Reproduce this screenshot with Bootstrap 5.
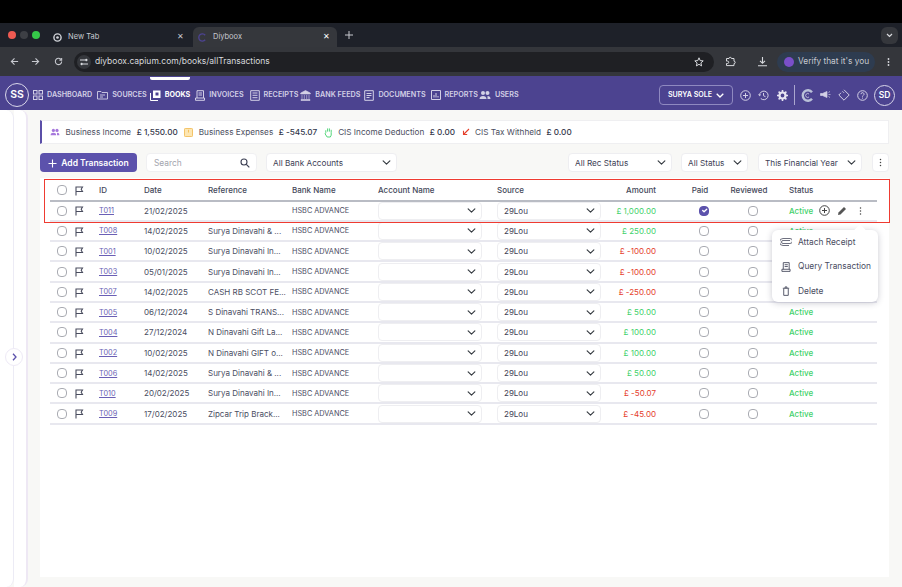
<!DOCTYPE html>
<html lang="en"><head><meta charset="utf-8"><title>Diyboox</title>
<link href="https://cdn.jsdelivr.net/npm/bootstrap@5.3.0/dist/css/bootstrap.min.css" rel="stylesheet">
<style>
html,body{height:587px;overflow:hidden}
body{background:#f8f8f6;font-family:Inter,"Liberation Sans",sans-serif;font-size:8px;color:#3d4054}
.blackbar{height:23px;background:#000}
.tabstrip{height:24px;background:#1e2129;color:#c7c9cf;font-size:7.5px;padding-left:8px}
.dot{width:8px;height:8px;border-radius:50%}
.chrome-tab{height:20px;width:144px;margin:4px 0 0 8px;border-radius:6px 6px 0 0;padding:0 7px 0 5px;background:#35373c}
.chrome-tab.idle{background:none;margin-left:13px;width:132px;padding:0 1px 0 0}
.tab-label{gap:6px}
.toolbar{height:29px;background:#34363b;color:#c7c9cf;padding:0 12px 0 10px;font-size:8.5px}
.tool-gap{margin-left:12px}
.tool-gap.wide{margin-left:14px}
.omni{height:20px;width:640px;margin-left:11px;border-radius:10px;background:#1f2024;padding:0 10px 0 3px;color:#d8dade}
.omni-ic{width:14px;height:14px;border-radius:50%;background:#35373c}
.ext-ic{margin-left:11px}
.dl-ic{margin-left:21px}
.verify{height:20px;width:98px;margin-left:9px;padding-left:7px;border-radius:10px;background:#2e3c50;font-size:8.3px}
.appnav{height:34px;background:#4c4390;padding:4px 7px 0 5px;color:#d3d0e6;font-size:7.2px;font-weight:600;position:relative}
.appnav .navlnk{color:inherit;text-decoration:none;display:flex;align-items:center;gap:4px;white-space:nowrap}
.appnav .navlnk.on{color:#fff;font-weight:700;position:relative}
.appnav .navlnk.on::before{content:"";position:absolute;left:0;right:0;top:-13px;height:3px;background:#fff;border-radius:0 0 2px 2px}
.nudge-b{margin-left:-2px}.nudge-r{margin-left:1px}.nudge-f{margin-left:-3px}.nudge-d{margin-left:-1px}.nudge-u{margin-left:-4px}
.avatar{width:24px;height:24px;border-radius:50%;border:1px solid #d9d6ea;color:#fff;font-size:10.5px;font-weight:600}
.avatar.sm{width:21px;height:21px;font-size:8.5px}
.co-btn{height:20px;width:74px;border:1px solid #8f89c0;border-radius:4px;color:#fff;font-size:7.1px;font-weight:600}
.vrule{width:1px;height:20px;background:#aaa6cf}
.navtools{gap:7px}
.navtools .tight{margin-left:-1px}
.navtools .loose{margin-left:1px}
.stage{height:477px;position:relative}
.rail{width:14px;background:#fff;border-right:1px solid #ecebf5;border-radius:0 8px 8px 0}
.rail.outer{border-right:2px solid #eee8f4}
.panel{margin:0 13px 10px 12px;width:849px;position:relative}
.sumbar{height:24px;margin-top:10px;background:#fff;border:1px solid #efeff1;border-left:2px solid #5b4fa8;padding-left:8px;gap:5.5px;font-size:8.2px;color:#4b4e60}
.sumbar b{font-weight:500;color:#33364a;margin-right:1px}
.filters{height:19px;margin-top:9px}
.add-btn{width:97px;height:19px;background:#5c52ac;border:0;border-radius:4px;color:#fff;font-size:8.5px;font-weight:600;padding:1px 0 0}
.add-btn:hover{background:#5c52ac;color:#fff}
.searchbox{width:111px;height:19px;margin-left:9px;background:#fff;border:1px solid #f0f0f2;border-radius:4px;padding:1px 6px 0 7px;color:#a3a5ae;font-size:8.4px}
.filters .form-select,.rowtbl .form-select{font-size:8.2px;color:#3d4054;border:1px solid #eeeef1;border-radius:4px;padding:1px 14px 0 6px;height:19px;background-size:11px 9px;background-position:right 4px center;box-shadow:none}
.bankpick{flex:0 0 131px;margin-left:9px}
.recpick{flex:0 0 104px;margin-left:auto}
.statpick{flex:0 0 67px;margin-left:9px}
.yearpick{flex:0 0 104px;margin-left:10px}
.kebab-btn{width:17px;height:19px;margin-left:10px;background:#fff;border:1px solid #eeeef1;border-radius:4px}
.tblcard{background:#fff;height:399px;margin-top:6px;padding:3px 12px 0 10px}
.tblwrap{width:827px;position:relative}
.rowtbl{table-layout:fixed;width:827px;margin:0;border-collapse:collapse;font-size:8px;--bs-table-bg:transparent}
.rowtbl th,.rowtbl td{padding:0;height:20.3px;vertical-align:middle;border-bottom:2px solid #e8e8ef;white-space:nowrap;overflow:visible;box-shadow:none}
.rowtbl th{font-weight:500;color:#444759;border-bottom:2px solid #b9bcc4;height:19.5px}
.rowtbl td{color:#4a4d5f}
.rowtbl td.amt,.rowtbl th.amt{text-align:right;padding-right:24px}
.rowtbl .ctr{text-align:center}
.rowtbl th.ctr{padding-right:8px}
.rowtbl .stat{padding-left:11px}
.rowtbl .flagcell{padding-left:3px}
.rowtbl td.bank{font-size:7.3px;padding-top:2px}
.rowtbl a{color:#6a5fb5;font-size:7.3px}
.rowtbl .form-select{height:18px;width:104px;font-size:8px;padding:0 14px 0 6px}
.rowtbl td.pos{color:#3fd16b}.rowtbl td.neg{color:#e5402c}
.stt{color:#3fd16b;font-weight:500}
.rowtbl .form-check-input{width:10px;height:10px;margin:0;display:block;border:1px solid #a9abb2;border-radius:4px;background-size:9px;box-shadow:none}
.rowtbl .form-check-input:checked{background-color:#5c52ac;border-color:#5c52ac}
.rowtbl .ctr .form-check-input{margin:0 auto}
.rowtbl .cb-first{padding-left:7px}
.act-a{margin-left:6px}.act-b{margin-left:7px}.act-c{margin-left:12px}
.redbox{position:absolute;left:-6px;top:-2px;width:846px;height:44px;border:1.5px solid #ef3b31;pointer-events:none}
.rowmenu{display:block;position:absolute;left:722px;top:49px;width:106px;height:72px;min-width:0;padding:0;border:0;border-radius:6px;box-shadow:0 1px 6px rgba(40,40,70,.25);font-size:8.5px;z-index:5}
.rowmenu::before{content:"";position:absolute;right:14px;top:-4px;width:8px;height:8px;background:#fff;transform:rotate(45deg)}
.rowmenu .dropdown-item{height:24.5px;padding:0 0 0 8px;font-size:8.4px;color:#4a4d5f;gap:6px;display:flex;align-items:center;position:relative}
.sidetoggle{position:absolute;left:5px;top:238px;width:18px;height:18px;border-radius:50%;background:#fff;border:1px solid #eeeaf6;z-index:3}
</style></head>
<body>
<svg width="0" height="0" class="position-absolute">
<symbol id="flag" viewBox="0 0 10 10"><path d="M2 9.5V1h6.5L7.2 3.200 8.500 5.500H2" fill="none" stroke="#4a4d5f" stroke-width="1.100"/></symbol>
<symbol id="dots" viewBox="0 0 4 12"><circle cx="2" cy="2" r="1" fill="#444"/><circle cx="2" cy="6" r="1" fill="#444"/><circle cx="2" cy="10" r="1" fill="#444"/></symbol>
</svg>
<div class="blackbar"></div>
<div class="tabstrip d-flex align-items-center">
  <span class="dot me-1" style="background:#ee5a52"></span><span class="dot me-1" style="background:#3d3f45"></span><span class="dot" style="background:#35c749"></span>
  <div class="chrome-tab idle d-flex align-items-center justify-content-between"><span class="d-flex align-items-center tab-label"><svg width="9" height="9" viewBox="0 0 10 10"><circle cx="5" cy="5" r="4" fill="none" stroke="#d0d2d8" stroke-width="1.600"/><circle cx="5" cy="5" r="1.500" fill="#d0d2d8"/></svg>New Tab</span><span>✕</span></div>
  <div class="chrome-tab d-flex align-items-center justify-content-between"><span class="d-flex align-items-center tab-label"><svg width="9" height="9" viewBox="0 0 10 10"><path d="M8 2.500a4 4 0 1 0 0 5" fill="none" stroke="#4c4390" stroke-width="1.500"/></svg><span>Diyboox</span></span><span class="text-white">✕</span></div>
  <svg class="ms-2" width="8" height="8" viewBox="0 0 8 8"><path d="M4 0v8M0 4h8" stroke="#c7c9cf" stroke-width="1"/></svg>
  <div class="ms-auto me-1 d-flex align-items-center justify-content-center rounded-2" style="width:17px;height:17px;background:#35373c"><svg width="7" height="5" viewBox="0 0 7 5"><path d="M1 1l2.500 2.500L6 1" fill="none" stroke="#d8dade" stroke-width="1.200"/></svg></div>
</div>
<div class="toolbar d-flex align-items-center">
  <svg width="9" height="9" viewBox="0 0 10 10"><path d="M9 5H1.500M5 1.500L1.500 5 5 8.500" fill="none" stroke="#c7c9cf" stroke-width="1.200"/></svg>
  <svg class="tool-gap" width="9" height="9" viewBox="0 0 10 10"><path d="M1 5h7.500M5 1.500L8.500 5 5 8.500" fill="none" stroke="#c7c9cf" stroke-width="1.200"/></svg>
  <svg class="tool-gap wide" width="9" height="9" viewBox="0 0 10 10"><path d="M8.500 5A3.500 3.500 0 1 1 7.500 2.500M8.500 1v2.500H6" fill="none" stroke="#c7c9cf" stroke-width="1.200"/></svg>
  <div class="omni d-flex align-items-center"><span class="omni-ic d-flex align-items-center justify-content-center me-1"><svg width="8" height="8" viewBox="0 0 8 8"><path d="M0 2h5M3 6h5" stroke="#d8dade"/><circle cx="6.300" cy="2" r="1.200" fill="#d8dade"/><circle cx="1.700" cy="6" r="1.200" fill="#d8dade"/></svg></span><span>diyboox.capium.com/books/allTransactions</span>
  <svg class="ms-auto" width="10" height="10" viewBox="0 0 10 10"><path d="M5 .8l1.200 2.800 3 .3-2.300 2 .7 3L5 7.300 2.400 8.900l.7-3-2.300-2 3-.3z" fill="none" stroke="#d8dade"/></svg></div>
  <svg class="ext-ic" width="11" height="11" viewBox="0 0 11 11"><path d="M1.500 2.500h2.500a1.200 1.200 0 0 1 2.400 0H9v2.700a1.200 1.200 0 0 1 0 2.400v2H1.500V7.500h1a1.200 1.200 0 0 0 0-2.400h-1z" fill="none" stroke="#d8dade"/></svg>
  <svg class="dl-ic" width="11" height="11" viewBox="0 0 11 11"><path d="M5.500 1v6M3 4.800l2.500 2.500L8 4.800M1 9.800h9" fill="none" stroke="#d8dade" stroke-width="1.100"/></svg>
  <div class="verify d-flex align-items-center gap-1"><span class="rounded-circle d-inline-block" style="width:10px;height:10px;background:#7a4fc9"></span><span>Verify that it's you</span></div>
  <svg class="ms-auto" width="3" height="10" viewBox="0 0 4 12"><circle cx="2" cy="2" r="1.200" fill="#d8dade"/><circle cx="2" cy="6" r="1.200" fill="#d8dade"/><circle cx="2" cy="10" r="1.200" fill="#d8dade"/></svg>
</div>
<nav class="appnav d-flex align-items-center">
  <div class="avatar d-flex align-items-center justify-content-center">SS</div>
  <div class="d-flex align-items-center ms-1" style="gap:5px">
    <a class="navlnk"><svg width="10" height="10" viewBox="0 0 10 10"><g fill="none" stroke="currentColor"><rect x=".5" y=".5" width="3.500" height="3.500"/><rect x="6" y=".5" width="3.500" height="3.500"/><rect x=".5" y="6" width="3.500" height="3.500"/><rect x="6" y="6" width="3.500" height="3.500"/></g></svg>DASHBOARD</a>
    <a class="navlnk"><svg width="11" height="10" viewBox="0 0 11 10"><path d="M.5 9V1.500h3.500l1 1h5.500V9zM3 5h5M3 7h3" fill="none" stroke="currentColor" stroke-width=".9"/></svg>SOURCES</a>
    <a class="navlnk on nudge-b"><svg width="11" height="11" viewBox="0 0 11 11"><path d="M3 .5h7.500V8H3z" fill="currentColor"/><path d="M.5 3v7.500H8" fill="none" stroke="currentColor"/><path d="M5.500 2.500h3v3h-3z" fill="#4c4390"/></svg>BOOKS</a>
    <a class="navlnk"><svg width="10" height="11" viewBox="0 0 10 11"><path d="M2 8V.7h6.500V8M.5 10.300h9V8H.5zM3.500 3h3.500M3.500 5h3.500" fill="none" stroke="currentColor"/></svg>INVOICES</a>
    <a class="navlnk nudge-r"><svg width="10" height="11" viewBox="0 0 10 11"><path d="M.7.700h8.600v9.600H.7zM2.500 3h5M2.500 5.300h5M2.500 7.700h5" fill="none" stroke="currentColor"/></svg>RECEIPTS</a>
    <a class="navlnk nudge-f"><svg width="11" height="11" viewBox="0 0 11 11"><path d="M5.500.5L.7 3v1h9.600V3zM1 9.500h9V10.500H1zM2 5v4M4.300 5v4M6.700 5v4M9 5v4" fill="currentColor" stroke="currentColor" stroke-width=".6"/></svg>BANK FEEDS</a>
    <a class="navlnk nudge-d"><svg width="10" height="11" viewBox="0 0 10 11"><path d="M.7.700h8.600v9.600H.7zM2.500 3.500h5M2.500 5.500h5M2.500 7.500h3" fill="none" stroke="currentColor"/></svg>DOCUMENTS</a>
    <a class="navlnk"><svg width="10" height="10" viewBox="0 0 10 10"><path d="M.5.500h9v9h-9zM3 7.500V5M5 7.500V3M7 7.500V6" fill="none" stroke="currentColor"/></svg>REPORTS</a>
    <a class="navlnk nudge-u"><svg width="12" height="10" viewBox="0 0 12 10"><circle cx="4" cy="3" r="2" fill="currentColor"/><circle cx="8.500" cy="3" r="2" fill="currentColor"/><path d="M.5 9c0-2 1.500-3 3.500-3s3.500 1 3.500 3zM8.500 9h3c0-2-1-3-3-3z" fill="currentColor"/></svg>USERS</a>
  </div>
  <div class="ms-auto d-flex align-items-center navtools">
    <div class="co-btn d-flex align-items-center justify-content-center gap-1">SURYA SOLE <svg width="8" height="5" viewBox="0 0 8 5"><path d="M.7.7L4 4 7.300.7" fill="none" stroke="#fff" stroke-width="1.300"/></svg></div>
    <svg width="11" height="11" viewBox="0 0 11 11"><circle cx="5.500" cy="5.500" r="4.800" fill="none" stroke="#d3d0e6"/><path d="M5.500 3v5M3 5.500h5" stroke="#d3d0e6"/></svg>
    <svg width="11" height="11" viewBox="0 0 11 11"><path d="M1.500 5.500a4.300 4.300 0 1 1 1.300 3M.5 4.500l1 1.200 1.300-1M5.500 3v2.700l2 1" fill="none" stroke="#d3d0e6"/></svg>
    <svg class="loose" width="11" height="11" viewBox="0 0 11 11"><circle cx="5.500" cy="5.500" r="3" fill="none" stroke="#e6e4f2" stroke-width="2.200"/><path d="M5.500 0v2M5.500 9v2M0 5.500h2M9 5.500h2M1.600 1.600L3 3M8 8l1.400 1.400M1.600 9.400L3 8M8 3l1.400-1.400" stroke="#e6e4f2" stroke-width="1.600"/></svg>
    <span class="vrule tight"></span>
    <svg class="tight" width="13" height="13" viewBox="0 0 13 13"><path d="M11 3.200a5.200 5.200 0 1 0 0 6.600" fill="none" stroke="#b9c0d8" stroke-width="2.400"/><path d="M8 5a2 2 0 1 0 0 3" fill="none" stroke="#d3d0e6" stroke-width=".8"/></svg>
    <svg class="tight" width="11" height="10" viewBox="0 0 11 10"><path d="M.5 3.500h2L7 1.500v6l-4.500-2h-2zM8.500 2.500l1.500-1M8.500 4.500H10.500M8.500 6.500l1.500 1" fill="#d3d0e6" stroke="#d3d0e6" stroke-width=".7"/></svg>
    <svg width="12" height="12" viewBox="0 0 12 12"><path d="M6 .8L11.200 6 6 11.200.8 6 3 3.800M4.500 2.300l1.500 1.500" fill="none" stroke="#d3d0e6"/></svg>
    <svg width="11" height="11" viewBox="0 0 11 11"><circle cx="5.500" cy="5.500" r="4.800" fill="none" stroke="#d3d0e6"/><path d="M4 4.200a1.500 1.500 0 1 1 2.200 1.300c-.5.300-.7.600-.7 1.100M5.500 7.600v1" fill="none" stroke="#d3d0e6"/></svg>
    <div class="avatar sm d-flex align-items-center justify-content-center tight">SD</div>
  </div>
</nav>
<div class="stage d-flex">
  <div class="rail"></div><div class="rail outer"></div>
  <button class="sidetoggle d-flex align-items-center justify-content-center p-0" aria-label="expand"><svg width="5" height="8" viewBox="0 0 5 8"><path d="M1 .8L4 4 1 7.200" fill="none" stroke="#5c52ac" stroke-width="1.300"/></svg></button>
  <main class="panel">
    <div class="sumbar d-flex align-items-center">
      <svg width="10" height="8" viewBox="0 0 12 10"><circle cx="4" cy="3" r="2" fill="#a678dc"/><circle cx="8.500" cy="3" r="2" fill="#a678dc"/><path d="M.5 9c0-2 1.500-3 3.500-3s3.500 1 3.500 3zM8.500 9h3c0-2-1-3-3-3z" fill="#a678dc"/></svg>
      <span>Business Income</span><b>£ 1,550.00</b>
      <svg width="9" height="9" viewBox="0 0 10 10"><rect x=".5" y=".5" width="9" height="9" rx="1" fill="#fde6b2" stroke="#f2bb55"/><path d="M5 2v3" stroke="#f2bb55"/></svg>
      <span>Business Expenses</span><b>£ -545.07</b>
      <svg width="9" height="11" viewBox="0 0 10 12"><path d="M2 6V3.500M4 5V1.500M6 5V1.500M8 6V3M2 6l-.800 1.500L3.500 11h3.500L8 9V6" fill="none" stroke="#3fd16b"/></svg>
      <span>CIS Income Deduction</span><b>£ 0.00</b>
      <svg width="8" height="8" viewBox="0 0 8 8"><path d="M7 1L1.500 6.500M1.500 2.800v3.700h3.700" fill="none" stroke="#e5402c" stroke-width="1.100"/></svg>
      <span>CIS Tax Withheld</span><b>£ 0.00</b>
    </div>
    <div class="filters d-flex">
      <button class="btn add-btn d-flex align-items-center justify-content-center gap-1"><svg width="9" height="9" viewBox="0 0 9 9"><path d="M4.500.5v8M.5 4.500h8" stroke="#fff" stroke-width="1.100"/></svg>Add Transaction</button>
      <div class="searchbox d-flex align-items-center justify-content-between">Search<svg width="10" height="10" viewBox="0 0 10 10"><circle cx="4" cy="4" r="3" fill="none" stroke="#3d4054" stroke-width="1.100"/><path d="M6.300 6.300L9.300 9.300" stroke="#3d4054" stroke-width="1.200"/></svg></div>
      <select class="form-select w-auto bankpick" aria-label="bank"><option>All Bank Accounts</option></select>
      <select class="form-select recpick" aria-label="rec"><option>All Rec Status</option></select>
      <select class="form-select statpick" aria-label="status"><option>All Status</option></select>
      <select class="form-select yearpick" aria-label="year"><option>This Financial Year</option></select>
      <div class="kebab-btn d-flex align-items-center justify-content-center"><svg width="3" height="9" viewBox="0 0 4 12"><use href="#dots"/></svg></div>
    </div>
    <div class="tblcard">
    <div class="tblwrap">
      <table class="table rowtbl">
        <colgroup><col style="width:21px"><col style="width:28px"><col style="width:45px"><col style="width:64px"><col style="width:84px"><col style="width:86px"><col style="width:119px"><col style="width:108px"><col style="width:75px"><col style="width:48px"><col style="width:50px"><col style="width:99px"></colgroup>
        <thead><tr><th class="cb-first"><input class="form-check-input" type="checkbox" aria-label="all"></th><th class="flagcell"><svg width="10" height="10"><use href="#flag"/></svg></th><th>ID</th><th>Date</th><th>Reference</th><th>Bank Name</th><th>Account Name</th><th>Source</th><th class="amt">Amount</th><th class="ctr">Paid</th><th class="ctr">Reviewed</th><th class="stat">Status</th></tr></thead>
        <tbody id="rows"></tbody>
      </table>
      <div class="redbox"></div>
      <ul class="dropdown-menu rowmenu">
        <li><a class="dropdown-item"><svg width="12" height="8" viewBox="0 0 12 8"><path d="M10 2.500H3a1.500 1.500 0 0 0 0 3h7a2.500 2.500 0 0 0 0-5H3a3.300 3.300 0 0 0 0 7h6" fill="none" stroke="#4a4d5f" stroke-width=".8"/></svg><span>Attach Receipt</span></a></li>
        <li><a class="dropdown-item"><svg width="12" height="10" viewBox="0 0 10 11"><path d="M2 8V.7h6.500V8M.5 10.300h9V8H.5zM3.500 3h3.500M3.500 5h3.500" fill="none" stroke="#4a4d5f"/></svg><span>Query Transaction</span></a></li>
        <li><a class="dropdown-item"><svg width="12" height="10" viewBox="0 0 10 11"><path d="M2.500 3v7.300h5V3M1.500 2.500h7M4 2.500V1h2v1.500" fill="none" stroke="#4a4d5f"/></svg><span>Delete</span></a></li>
      </ul>
    </div>
    </div>
  </main>
</div>
<script>
const data=[["T011","21/02/2025","","£ 1,000.00",1],["T008","14/02/2025","Surya Dinavahi & ...","£ 250.00",1],["T001","10/02/2025","Surya Dinavahi In...","£ -100.00",0],["T003","05/01/2025","Surya Dinavahi In...","£ -100.00",0],["T007","14/02/2025","CASH RB SCOT FE...","£ -250.00",0],["T005","06/12/2024","S Dinavahi TRANS...","£ 50.00",1],["T004","27/12/2024","N Dinavahi Gift La...","£ 100.00",1],["T002","10/02/2025","N Dinavahi GIFT o...","£ 100.00",1],["T006","14/02/2025","Surya Dinavahi & ...","£ 50.00",1],["T010","20/02/2025","Surya Dinavahi In...","£ -50.07",0],["T009","17/02/2025","Zipcar Trip Brack...","£ -45.00",0]];
document.getElementById('rows').innerHTML=data.map((r,i)=>`<tr><td class="cb-first"><input class="form-check-input" type="checkbox" aria-label="select"></td><td class="flagcell"><svg width="10" height="10"><use href="#flag"/></svg></td><td><a href="#">${r[0]}</a></td><td>${r[1]}</td><td>${r[2]}</td><td class="bank">HSBC ADVANCE</td><td><select class="form-select" aria-label="account"><option></option></select></td><td><select class="form-select" aria-label="source"><option>29Lou</option></select></td><td class="amt ${r[4]?'pos':'neg'}">${r[3]}</td><td class="ctr"><input class="form-check-input" type="checkbox" aria-label="paid"${i==0?' checked':''}></td><td class="ctr"><input class="form-check-input" type="checkbox" aria-label="reviewed"></td><td class="stat"><span class="d-flex align-items-center">${i>=2&&i<=4?'':'<span class="stt">Active</span>'}${i==0?`<svg class="act-a" width="11" height="11" viewBox="0 0 11 11"><circle cx="5.500" cy="5.500" r="4.800" fill="none" stroke="#444"/><path d="M5.500 3v5M3 5.500h5" stroke="#444"/></svg><svg class="act-b" width="10" height="10" viewBox="0 0 10 10"><path d="M1 9l.5-2.500L7 1l2 2-5.500 5.500z" fill="#555"/></svg><svg class="act-c" width="3" height="10" viewBox="0 0 4 12"><use href="#dots"/></svg>`:''}</span></td></tr>`).join('');
</script>
<script src="https://cdn.jsdelivr.net/npm/bootstrap@5.3.0/dist/js/bootstrap.bundle.min.js"></script>
</body></html>
